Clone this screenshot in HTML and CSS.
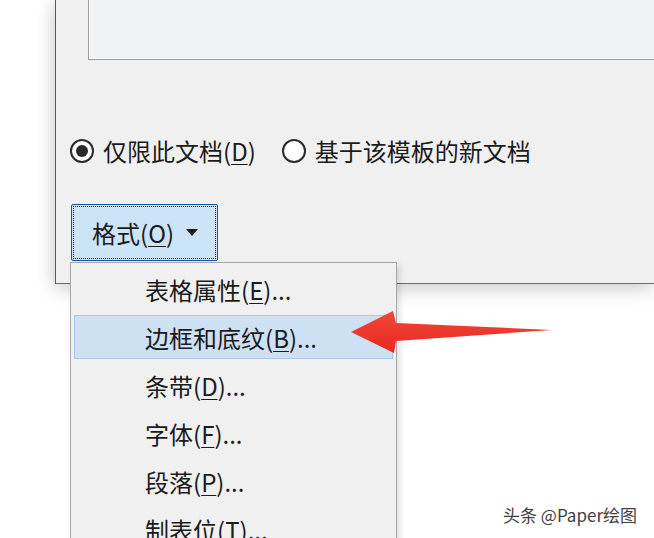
FILE: index.html
```html
<!DOCTYPE html>
<html lang="zh-CN">
<head>
  <meta charset="UTF-8" />
  <meta name="viewport" content="width=device-width, initial-scale=1.0"/>
  <title>样式 - 格式</title>
  <link rel="stylesheet" href="styles.css">
</head>
<body>
  <div class="dialog">
    <div class="preview"></div>

    <div class="scope">
      <label class="radio">
        <span class="dot checked"></span>
        <span>仅限此文档(<u>D</u>)</span>
      </label>
      <label class="radio">
        <span class="dot"></span>
        <span>基于该模板的新文档</span>
      </label>
    </div>

    <div class="format">
      <button class="format-btn"><span>格式(<u>O</u>)</span> <span class="caret"></span></button>

      <ul class="menu">
        <li>表格属性(<u>E</u>)...</li>
        <li class="active">边框和底纹(<u>B</u>)...</li>
        <li>条带(<u>D</u>)...</li>
        <li>字体(<u>F</u>)...</li>
        <li>段落(<u>P</u>)...</li>
        <li>制表位(<u>T</u>)...</li>
      </ul>
    </div>
  </div>

  <!-- annotation arrow -->
  <svg class="pointer" width="654" height="538" viewBox="0 0 654 538">
    <defs>
      <linearGradient id="red" x1="0" y1="0" x2="0" y2="1">
        <stop offset="0" stop-color="#f2473b"/>
        <stop offset="1" stop-color="#e8281f"/>
      </linearGradient>
    </defs>
    <polygon points="351,332 393,311 396,323 552,330 396,341 394,353" fill="url(#red)"/>
  </svg>

  <div class="watermark">头条 @Paper绘图</div>
</body>
</html>
```

FILE: styles.css
```css
body {
  margin: 0;
  background: #ffffff;
  font-family: "Noto Sans CJK SC", "Microsoft YaHei", sans-serif;
  color: #1b1b1b;
  height: 538px;
  overflow: hidden;
  position: relative;
}

.dialog {
  margin-left: 55px;
  height: 284px;
  box-sizing: border-box;
  background: #f0f0f0;
  border-left: 1px solid #55585c;
  border-bottom: 1px solid #6a6c70;
  box-shadow: 0 6px 18px rgba(0, 0, 0, 0.16), -6px 0 14px rgba(0, 0, 0, 0.05);
  padding-left: 14px;
  display: flex;
  flex-direction: column;
}

.preview {
  margin-left: 18px;
  height: 60px;
  box-sizing: border-box;
  background: #f1f2f3;
  border-left: 1px solid #9a9ca0;
  border-bottom: 1px solid #9a9ca0;
  box-shadow: inset 1px -1px 0 #ffffff;
}

.scope {
  margin-top: 79px;
  height: 24px;
  display: flex;
  align-items: center;
  font-size: 24px;
  line-height: 24px;
}

.radio {
  display: flex;
  align-items: center;
  gap: 9px;
  margin-right: 26px;
}

.dot {
  width: 24px;
  height: 24px;
  box-sizing: border-box;
  border: 2px solid #2a2a2a;
  border-radius: 50%;
  background: #ffffff;
  display: flex;
  align-items: center;
  justify-content: center;
}

.dot.checked::after {
  content: "";
  width: 12px;
  height: 12px;
  border-radius: 50%;
  background: #2a2a2a;
}

u {
  text-decoration-thickness: 1px;
  text-underline-offset: 3px;
}

.format {
  margin-top: 41px;
  margin-left: 1px;
  position: relative;
  width: 147px;
}

.format-btn {
  width: 147px;
  height: 57px;
  box-sizing: border-box;
  background: #cce4f7;
  border: 1px solid #0b5aa8;
  border-radius: 2px;
  outline: 1px dotted #1a1a1a;
  outline-offset: -3px;
  font-family: inherit;
  font-size: 24px;
  color: #1b1b1b;
  padding: 0 0 0 20px;
  text-align: left;
  display: flex;
  align-items: center;
  gap: 12px;
}

.caret {
  width: 0;
  height: 0;
  border-left: 6px solid transparent;
  border-right: 6px solid transparent;
  border-top: 7px solid #1b1b1b;
}

.menu {
  position: absolute;
  top: 58px;
  left: -1px;
  width: 327px;
  height: 300px;
  box-sizing: border-box;
  margin: 0;
  padding: 4px 3px 0;
  list-style: none;
  background: #f0f0f0;
  border: 1px solid #a4a6a8;
  box-shadow: 3px 3px 6px rgba(0, 0, 0, 0.12);
  font-size: 24px;
  display: flex;
  flex-direction: column;
  gap: 4px;
}

.menu li {
  flex: none;
  height: 44px;
  box-sizing: border-box;
  border: 1px solid transparent;
  padding-left: 70px;
  display: flex;
  align-items: center;
}

.menu li.active {
  background: #cde0f4;
  border-color: #a9c8e8;
}

.pointer {
  position: absolute;
  top: 0;
  left: 0;
  pointer-events: none;
}

.watermark {
  position: absolute;
  top: 503px;
  right: 17px;
  font-size: 17px;
  line-height: 24px;
  color: #404040;
  text-shadow: 0 0 2px #ffffff;
}
```
